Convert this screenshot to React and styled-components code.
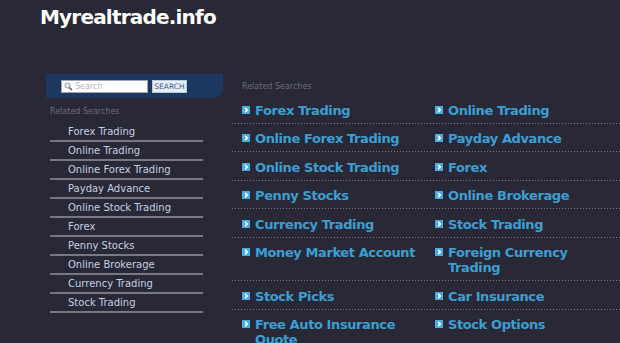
import React from 'react';
import styled, { createGlobalStyle } from 'styled-components';

const GlobalStyle = createGlobalStyle`
  html, body {
    margin: 0;
    padding: 0;
    background: #282836;
    overflow: hidden;
  }
  body {
    font-family: "DejaVu Sans", Verdana, sans-serif;
  }
`;

const sideLinks = [
  'Forex Trading',
  'Online Trading',
  'Online Forex Trading',
  'Payday Advance',
  'Online Stock Trading',
  'Forex',
  'Penny Stocks',
  'Online Brokerage',
  'Currency Trading',
  'Stock Trading',
];

const mainRows = [
  ['Forex Trading', 'Online Trading'],
  ['Online Forex Trading', 'Payday Advance'],
  ['Online Stock Trading', 'Forex'],
  ['Penny Stocks', 'Online Brokerage'],
  ['Currency Trading', 'Stock Trading'],
  ['Money Market Account', 'Foreign Currency Trading'],
  ['Stock Picks', 'Car Insurance'],
  ['Free Auto Insurance Quote', 'Stock Options'],
];

const Page = styled.div`
  width: 640px;
`;

const Header = styled.header`
  padding: 5px 0 0 40px;
  height: 74px;
  box-sizing: border-box;
`;

const Logo = styled.h1`
  margin: 0;
  font-size: 20px;
  line-height: 24px;
  font-weight: bold;
  letter-spacing: -0.8px;
  color: #ffffff;
`;

const Main = styled.div`
  display: flex;
  padding-left: 46px;
`;

const Sidebar = styled.aside`
  width: 177px;
  flex-shrink: 0;
`;

const SearchBox = styled.form`
  height: 24px;
  margin: 0;
  background: #1c3760;
  border-bottom-right-radius: 9px;
  display: flex;
  align-items: flex-start;
  padding: 6px 0 0 15px;
  box-sizing: border-box;
  gap: 4px;
`;

const InputWrap = styled.div`
  position: relative;
  display: flex;
  width: 87px;
  height: 13px;
  background: #fff;
  border: 1px solid #9aa6b8;
  box-sizing: border-box;
`;

const SearchIcon = styled.svg`
  position: absolute;
  left: 2px;
  top: 1px;
`;

const Input = styled.input`
  flex: 1;
  min-width: 0;
  height: 11px;
  margin: 0;
  border: 0;
  padding: 0 0 0 13px;
  box-sizing: border-box;
  font-family: inherit;
  font-size: 8px;
  line-height: 9px;
  background: transparent;
  outline: none;
  &::placeholder {
    color: #b4b4bc;
  }
`;

const Button = styled.button`
  display: block;
  height: 13px;
  width: 35px;
  padding: 0;
  margin: 0;
  border: 1px solid #b8c8dc;
  background-color: #e8eef6;
  color: #3a5a88;
  font-family: inherit;
  font-size: 7.5px;
  line-height: 11px;
  text-align: center;
  overflow: hidden;
`;

const Caption = styled.div`
  font-size: 8px;
  line-height: 10px;
  color: #6c6c7c;
  padding-left: ${(p) => p.$indent}px;
  margin: ${(p) => p.$margin};
`;

const SideList = styled.ul`
  list-style: none;
  margin: 0 0 0 4px;
  padding: 0;
  width: 153px;
`;

const SideItem = styled.li`
  padding: 3px 0 2px 18px;
  font-size: 10px;
  line-height: 12px;
  color: #c6d0e2;
  border-bottom: 2px solid #787884;
`;

const Content = styled.section`
  margin-left: 9px;
  padding-top: 8px;
  width: 400px;
  flex-shrink: 0;
`;

const Row = styled.div`
  display: grid;
  grid-template-columns: 193px 193px;
  padding: 6.5px 0 6px 10px;
  border-bottom: 1px solid transparent;
  background-image: linear-gradient(to right, #7a7a88 1px, transparent 1px);
  background-size: 3px 1px;
  background-repeat: repeat-x;
  background-position: 0 100%;
`;

const Link = styled.a`
  display: flex;
  align-items: flex-start;
  gap: 5px;
  padding-right: 12px;
  font-size: 13px;
  line-height: 15px;
  font-weight: bold;
  letter-spacing: -0.4px;
  color: #3c9fd2;
  text-decoration: none;
`;

const Bullet = styled.svg`
  flex-shrink: 0;
  margin-top: 3px;
`;

const Arrow = () => (
  <Bullet width="8" height="8" viewBox="0 0 8 8">
    <rect width="8" height="8" fill="#48ace0" />
    <path d="M3 1.8 L5.3 4 L3 6.2" stroke="#ffffff" strokeWidth="1.6" fill="none" />
  </Bullet>
);

export default function App() {
  return (
    <Page>
      <GlobalStyle />
      <Header>
        <Logo>Myrealtrade.info</Logo>
      </Header>
      <Main>
        <Sidebar>
          <SearchBox onSubmit={(e) => e.preventDefault()}>
            <InputWrap>
              <SearchIcon width="9" height="9" viewBox="0 0 9 9">
                <circle cx="3.5" cy="3.5" r="2.6" stroke="#8a94a4" strokeWidth="1" fill="#e4ecf4" />
                <path d="M5.4 5.4 L8 8" stroke="#555" strokeWidth="1.4" />
              </SearchIcon>
              <Input placeholder="Search" />
            </InputWrap>
            <Button type="submit">SEARCH</Button>
          </SearchBox>
          <Caption $indent={4} $margin="9px 0 6px">Related Searches</Caption>
          <SideList>
            {sideLinks.map((t) => (
              <SideItem key={t}>{t}</SideItem>
            ))}
          </SideList>
        </Sidebar>
        <Content>
          <Caption $indent={10} $margin="0 0 4px">Related Searches</Caption>
          {mainRows.map((pair) => (
            <Row key={pair[0]}>
              {pair.map((t) => (
                <Link key={t} href="#">
                  <Arrow />
                  <span>{t}</span>
                </Link>
              ))}
            </Row>
          ))}
        </Content>
      </Main>
    </Page>
  );
}
